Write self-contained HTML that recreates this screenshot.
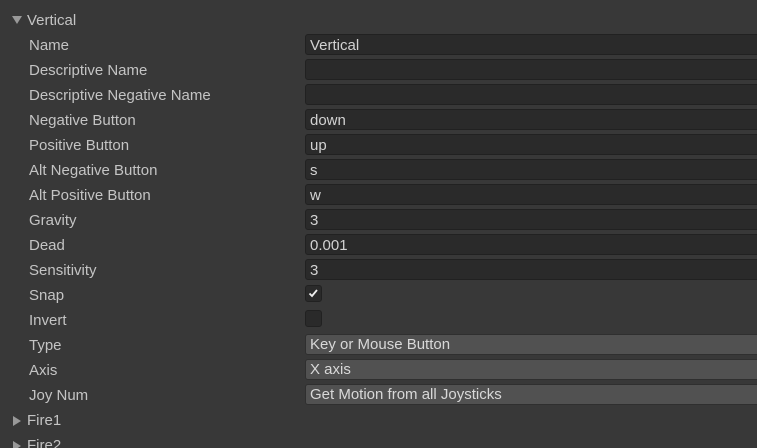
<!DOCTYPE html>
<html><head><style>
html,body{margin:0;width:757px;height:448px;overflow:hidden}
body{background:#383838;font-family:"Liberation Sans",sans-serif;font-size:15px;color:#c4c4c4;position:relative}
.r{position:absolute;left:0;height:25px;width:757px}
.l{position:absolute;left:29px;top:5px;line-height:18px}
.f{position:absolute;left:305px;top:2px;width:460px;height:21px;box-sizing:border-box;background:#2a2a2a;border:1px solid #212121;border-radius:3px;padding-left:4px;line-height:21px;color:#d2d2d2}
.d{background:#515151;border-color:#2f2f2f;color:#d8d8d8;line-height:19px}
.c{position:absolute;left:305px;top:3px;width:17px;height:17px;box-sizing:border-box;background:#2a2a2a;border:1px solid #212121;border-radius:3px}
.t{position:absolute;left:12px;top:9px;width:0;height:0}
.down{border-left:5px solid transparent;border-right:5px solid transparent;border-top:8px solid #999}
.right{border-top:5px solid transparent;border-bottom:5px solid transparent;border-left:8px solid #999;left:13px;top:9px}
</style></head><body>
<div class="r" style="top:7px"><div class="t down"></div><div class="l" style="left:27px">Vertical</div></div>
<div class="r" style="top:32px"><div class="l">Name</div><div class="f">Vertical</div></div>
<div class="r" style="top:57px"><div class="l">Descriptive Name</div><div class="f"></div></div>
<div class="r" style="top:82px"><div class="l">Descriptive Negative Name</div><div class="f"></div></div>
<div class="r" style="top:107px"><div class="l">Negative Button</div><div class="f">down</div></div>
<div class="r" style="top:132px"><div class="l">Positive Button</div><div class="f">up</div></div>
<div class="r" style="top:157px"><div class="l">Alt Negative Button</div><div class="f">s</div></div>
<div class="r" style="top:182px"><div class="l">Alt Positive Button</div><div class="f">w</div></div>
<div class="r" style="top:207px"><div class="l">Gravity</div><div class="f">3</div></div>
<div class="r" style="top:232px"><div class="l">Dead</div><div class="f">0.001</div></div>
<div class="r" style="top:257px"><div class="l">Sensitivity</div><div class="f">3</div></div>
<div class="r" style="top:282px"><div class="l">Snap</div><div class="c"><svg width="15" height="15" style="position:absolute;left:0;top:0"><path d="M3.5 7.5 L6 10 L11 4" stroke="#eee" stroke-width="1.8" fill="none"/></svg></div></div>
<div class="r" style="top:307px"><div class="l">Invert</div><div class="c"></div></div>
<div class="r" style="top:332px"><div class="l">Type</div><div class="f d">Key or Mouse Button</div></div>
<div class="r" style="top:357px"><div class="l">Axis</div><div class="f d">X axis</div></div>
<div class="r" style="top:382px"><div class="l">Joy Num</div><div class="f d">Get Motion from all Joysticks</div></div>
<div class="r" style="top:407px"><div class="t right"></div><div class="l" style="left:27px">Fire1</div></div>
<div class="r" style="top:432px"><div class="t right"></div><div class="l" style="left:27px">Fire2</div></div>
</body></html>
